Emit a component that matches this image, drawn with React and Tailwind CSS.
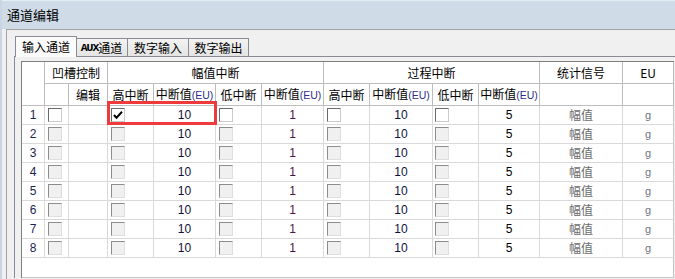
import React from "react";

const cjk = "font-['Noto_Sans_CJK_SC',sans-serif]";
const latin = "font-['Liberation_Sans',sans-serif]";
const cols =
  "grid-cols-[23px_24px_39px_46px_62px_46px_62px_46px_63px_46px_61px_83px_51px]";

const Check = ({ on, disabled }) => {
  if (disabled) {
    return (
      <div className="w-[14px] h-[14px] border border-t-[#8c8c8c] border-l-[#8c8c8c] border-r-[#dedede] border-b-[#dedede] bg-[#f0f0f0]" />
    );
  }
  return (
    <div className="w-[14px] h-[14px] border border-t-[#6a6a6a] border-l-[#6a6a6a] border-r-[#cbcbcb] border-b-[#cbcbcb] bg-white flex items-center justify-center">
      {on && (
        <svg width="12" height="12" viewBox="0 0 12 12">
          <polyline points="2,6 4.5,8.8 10,2.8" fill="none" stroke="#000" strokeWidth="2" />
        </svg>
      )}
    </div>
  );
};

const H = ({ children, className = "" }) => (
  <div
    className={
      "border-r border-b border-[#bdbdbd] flex items-center justify-center text-[12px] text-black leading-none " +
      cjk +
      " " +
      className
    }
  >
    {children}
  </div>
);

const EuLabel = () => (
  <span>
    中断值<span className={latin + " text-[10.5px] text-[#2e2e8a]"}>(EU)</span>
  </span>
);

const Cell = ({ children, className = "" }) => (
  <div className={"border-r border-b border-[#d9d9d9] flex items-center leading-none " + className}>
    {children}
  </div>
);

const Row = ({ n }) => {
  const dis = n !== 1;
  return (
    <>
      <Cell className={"justify-center text-[12px] text-[#1e1e55] " + latin}>{n}</Cell>
      <Cell className="pl-[3px]">
        <Check disabled={dis} />
      </Cell>
      <Cell />
      <Cell className="pl-[3px]">
        <Check disabled={dis} on={n === 1} />
      </Cell>
      <Cell className={"justify-center text-[12px] text-[#10103c] " + latin}>10</Cell>
      <Cell className="pl-[3px]">
        <Check disabled={dis} />
      </Cell>
      <Cell className={"justify-center text-[12px] text-[#4a1448] " + latin}>1</Cell>
      <Cell className="pl-[3px]">
        <Check disabled={dis} />
      </Cell>
      <Cell className={"justify-center text-[12px] text-[#10103c] " + latin}>10</Cell>
      <Cell className="pl-[2px]">
        <Check disabled={dis} />
      </Cell>
      <Cell className={"justify-center text-[12px] text-black " + latin}>5</Cell>
      <Cell className={"justify-center text-[12px] text-[#6c6c6c] " + cjk}>幅值</Cell>
      <Cell className={"justify-center text-[11px] text-[#707486] border-r-[#c8c8c8] " + latin}>g</Cell>
    </>
  );
};

const Tab = ({ children, active }) =>
  active ? (
    <div className={"relative z-10 h-[21px] -mb-px w-[62px] border border-b-0 border-[#898c95] bg-[#fbfbfb] flex items-center justify-center text-[12px] text-black " + cjk}>
      {children}
    </div>
  ) : (
    <div className={"h-[18px] -ml-px border border-b-0 border-[#898c95] bg-gradient-to-b from-[#f3f3f3] to-[#e4e4e4] flex items-center justify-center text-[12px] text-black " + cjk}>
      {children}
    </div>
  );

export default function App() {
  const rows = [1, 2, 3, 4, 5, 6, 7, 8];
  return (
    <div className="w-[675px] h-[279px] overflow-hidden flex flex-col bg-[#f0f0f0] border-l-2 border-[#c9d5e2]">
      <div className={"h-[29px] shrink-0 bg-[#cfdbe7] border-t border-[#e4ecf3] pl-[5px] flex items-center text-[13px] text-black " + cjk}>
        通道编辑
      </div>
      <div className="flex-1 ml-[4px] border-t border-l border-[#a3a3a3] flex flex-col">
        <div className="ml-[7px] flex flex-col">
          <div className="h-[26px] flex items-end pl-[1px]">
            <Tab active>输入通道</Tab>
            <div className="w-[52px] -ml-px">
              <Tab>
                <span className="font-['Liberation_Mono',monospace] text-[11.5px] font-bold tracking-[-1px]">AUX</span>
                通道
              </Tab>
            </div>
            <div className="w-[61px]">
              <Tab>数字输入</Tab>
            </div>
            <div className="w-[60px]">
              <Tab>数字输出</Tab>
            </div>
          </div>
          <div className="border-t border-l border-[#898c95] pt-[4px] pl-[6px]">
            <div className="relative w-fit border-t border-l border-[#7f7f7f] bg-white">
              <div className={"grid " + cols + " grid-rows-[22px_22px_repeat(8,19px)_20px]"}>
                <H className="row-span-2" />
                <H className="col-span-2">凹槽控制</H>
                <H className="col-span-4">幅值中断</H>
                <H className="col-span-4">过程中断</H>
                <H>统计信号</H>
                <H className={latin + " text-[11px] text-[#1e2a6a]"}>EU</H>
                <H />
                <H>编辑</H>
                <H>高中断</H>
                <H>
                  <EuLabel />
                </H>
                <H>低中断</H>
                <H>
                  <EuLabel />
                </H>
                <H>高中断</H>
                <H>
                  <EuLabel />
                </H>
                <H>低中断</H>
                <H>
                  <EuLabel />
                </H>
                <H />
                <H />
                {rows.map((n) => (
                  <Row key={n} n={n} />
                ))}
                <div className="col-span-13 border-r border-b border-[#c4c4c4]" />
              </div>
              <div className="absolute left-[85px] top-[39px] w-[110px] h-[24px] border-[3px] border-[#ee3a3a] pointer-events-none" />
            </div>
          </div>
        </div>
      </div>
    </div>
  );
}
